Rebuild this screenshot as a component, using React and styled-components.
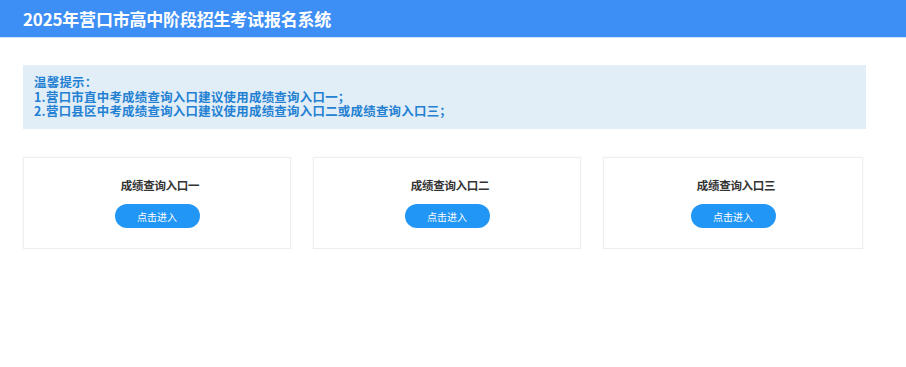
import React from "react";
import styled, { createGlobalStyle } from "styled-components";

const GlobalStyle = createGlobalStyle`
  html, body { margin: 0; padding: 0; background: #ffffff; }
  body { font-family: "Noto Sans CJK SC", "Noto Sans", "Liberation Sans", sans-serif; }
  * { box-sizing: border-box; }
`;

const Header = styled.header`
  height: 38px;
  background: #3d8ef5;
  border-bottom: 1px solid #c9e6fb;
  display: flex;
  align-items: center;
  padding: 0 23px;
`;

const Title = styled.h1`
  margin: 0;
  font-size: 17px;
  font-weight: 700;
  color: #ffffff;
  letter-spacing: -0.2px;
  line-height: 1;
`;

const Main = styled.main`
  padding: 27px 23px 0;
  display: flex;
  flex-direction: column;
  gap: 28px;
`;

const Notice = styled.div`
  width: 843px;
  height: 64px;
  background: #e1eef8;
  padding: 10px 11px 0;
  color: #2380d2;
  font-size: 12.4px;
  font-weight: 700;
  letter-spacing: 0.3px;
  display: flex;
  flex-direction: column;
`;

const NoticeLine = styled.div`
  white-space: nowrap;
  height: 14.5px;
  line-height: 14.5px;
`;

const Cards = styled.div`
  display: grid;
  grid-template-columns: 268px 268px 260px;
  column-gap: 22px;
`;

const Card = styled.div`
  height: 92px;
  background: #ffffff;
  border: 1px solid #eeeeee;
  box-shadow: 0 0 2px rgba(0, 0, 0, 0.04);
  display: flex;
  flex-direction: column;
  align-items: center;
  padding-top: 19px;
`;

const CardTitle = styled.div`
  font-size: 11.5px;
  font-weight: 700;
  color: #333333;
  line-height: 16px;
  letter-spacing: -0.3px;
  padding-left: 6px;
`;

const EnterButton = styled.button`
  margin-top: 11px;
  width: 85px;
  height: 24px;
  border: none;
  border-radius: 12px;
  background: #2296f5;
  color: #ffffff;
  font-family: inherit;
  font-size: 10px;
  padding: 0;
  cursor: pointer;
`;

const entries = ["成绩查询入口一", "成绩查询入口二", "成绩查询入口三"];

export default function App() {
  return (
    <>
      <GlobalStyle />
      <Header>
        <Title>2025年营口市高中阶段招生考试报名系统</Title>
      </Header>
      <Main>
        <Notice>
          <NoticeLine>温馨提示：</NoticeLine>
          <NoticeLine>1.营口市直中考成绩查询入口建议使用成绩查询入口一；</NoticeLine>
          <NoticeLine>2.营口县区中考成绩查询入口建议使用成绩查询入口二或成绩查询入口三；</NoticeLine>
        </Notice>
        <Cards>
          {entries.map((e) => (
            <Card key={e}>
              <CardTitle>{e}</CardTitle>
              <EnterButton>点击进入</EnterButton>
            </Card>
          ))}
        </Cards>
      </Main>
    </>
  );
}
